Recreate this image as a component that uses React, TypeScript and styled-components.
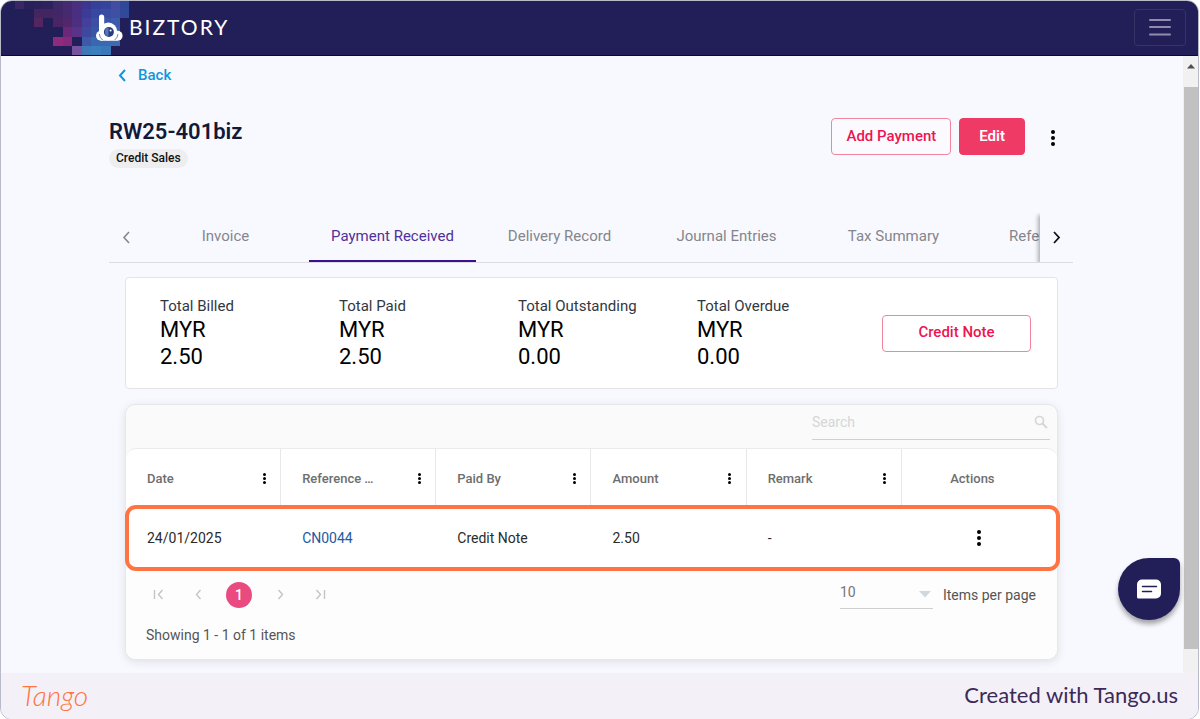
import React from "react";
import styled, { createGlobalStyle, css } from "styled-components";

const GlobalStyle = createGlobalStyle`
  *, *::before, *::after { box-sizing: border-box; }
  body {
    margin: 0;
    background: #ffffff;
    font-family: Roboto, "Liberation Sans", sans-serif;
    color: #212529;
  }
  button, input, select { font: inherit; color: inherit; }
  button { cursor: pointer; }
`;

const Frame = styled.div`
  display: flex;
  flex-direction: column;
  min-height: 100vh;
  margin-right: 1px;
  border: 1px solid #b9bac8;
  border-radius: 12px;
  overflow: hidden;
  background: #f8f9fe;
`;

const TopBar = styled.header`
  display: flex;
  justify-content: space-between;
  align-items: center;
  height: 55px;
  padding-right: 12px;
  background: #221e58;
  border-bottom: 1px solid #0c0838;
`;

const Brand = styled.a`
  display: flex;
  align-items: center;
  height: 54px;
  color: #ffffff;
  text-decoration: none;
  font: 400 21px/24px Lato, sans-serif;
  letter-spacing: 2px;
`;

const BrandName = styled.span`
  padding-bottom: 2px;
`;

const MenuButton = styled.button`
  display: grid;
  place-items: center;
  width: 52px;
  height: 37px;
  margin-bottom: 2px;
  padding: 0;
  background: none;
  border: 1px solid #373366;
  border-radius: 4px;
`;

const Viewport = styled.div`
  display: flex;
  flex: 1;
`;

const Page = styled.main`
  position: relative;
  flex: 1;
  min-width: 0;
  padding: 8px 110px 13px 108px;
`;

const ScrollTrack = styled.div`
  display: flex;
  flex-direction: column;
  width: 15px;
  padding: 8px 0 24px;
  background: #f1f1f1;
`;

const ScrollArrow = styled.svg`
  align-self: center;
  margin-bottom: 18px;
`;

const ScrollThumb = styled.div`
  flex: 1;
  margin-left: 1px;
  background: #c1c1c1;
`;

const BackLink = styled.a`
  display: inline-flex;
  align-items: center;
  gap: 12px;
  padding-left: 9px;
  color: #1296db;
  font-size: 15px;
  line-height: 22px;
  font-weight: 500;
  text-decoration: none;
`;

const Heading = styled.div`
  display: flex;
  justify-content: space-between;
  align-items: flex-start;
  margin-top: 30px;
`;

const Title = styled.h1`
  margin: 0;
  color: #121a3a;
  font-size: 22px;
  line-height: 31px;
  font-weight: 600;
`;

const Tag = styled.span`
  display: inline-block;
  padding: 0 7px;
  border-radius: 10px;
  background: #eeeeee;
  color: #111111;
  font-size: 12px;
  line-height: 19px;
  font-weight: 500;
`;

const ActionGroup = styled.div`
  display: flex;
  align-items: center;
  gap: 8px;
  padding: 2px 8px 0 0;
`;

const Button = styled.button<{ $solid?: boolean; $wide?: boolean }>`
  height: 37px;
  padding: 0 14px 2px;
  border: 1px solid #f2849c;
  border-radius: 4px;
  background: #fbfbff;
  color: #ee1451;
  font-size: 15px;
  font-weight: 500;
  ${(p) =>
    p.$solid &&
    css`
      padding: 0 19px 2px;
      border-color: #ef3a66;
      background: #ef3a66;
      color: #ffffff;
      font-weight: 600;
    `}
  ${(p) =>
    p.$wide &&
    css`
      width: 149px;
      background: #ffffff;
    `}
`;

const IconButton = styled.button`
  display: inline-grid;
  place-items: center;
  min-width: 16px;
  height: 24px;
  padding: 0;
  border: 0;
  background: none;
`;

const ActionMenu = styled(IconButton)`
  width: 24px;
  margin: 2px 0 0 8px;
`;

const TabBar = styled.nav`
  display: flex;
  height: 50px;
  margin-top: 45px;
  border-bottom: 1px solid #dcdde3;
`;

const TabArrow = styled.button<{ $raised?: boolean }>`
  display: grid;
  place-items: center;
  flex: none;
  width: 33px;
  padding: 0;
  border: 0;
  background: #f8f9fe;
  ${(p) =>
    p.$raised &&
    css`
      box-shadow: -2px 2px 4px rgba(0, 0, 0, 0.3);
      clip-path: inset(0 0 0 -8px);
    `}
`;

const TabList = styled.div`
  display: flex;
  flex: 1;
  min-width: 0;
  overflow: hidden;
`;

const Tab = styled.button<{ $active?: boolean }>`
  flex: none;
  min-width: 167px;
  padding: 0 22px 1px;
  border: 0;
  border-bottom: 2px solid ${(p) => (p.$active ? "#3c0f91" : "transparent")};
  background: none;
  color: ${(p) => (p.$active ? "#52309a" : "#85868c")};
  font-size: 15px;
  white-space: nowrap;
  &:last-child { padding: 0 32px 1px; }
`;

const Panel = styled.div`
  padding: 14px 15px 0 16px;
`;

const Summary = styled.section`
  display: flex;
  align-items: center;
  justify-content: space-between;
  height: 112px;
  padding: 0 26px 0 34px;
  border: 1px solid #e3e4e8;
  border-radius: 4px;
  background: #ffffff;
`;

const Totals = styled.dl`
  display: grid;
  grid-template-columns: repeat(4, 179px);
  margin: 0;
`;

const TotalLabel = styled.dt`
  color: #333840;
  font-size: 15px;
  line-height: 20px;
`;

const TotalValue = styled.dd`
  width: 64px;
  margin: 0;
  color: #000000;
  font-size: 22px;
  line-height: 27px;
`;

const GridCard = styled.section`
  margin-top: 15px;
  border: 1px solid #e6e7ea;
  border-radius: 10px;
  background: #fafafa;
  box-shadow: 0 2px 10px rgba(0, 0, 0, 0.1);
`;

const GridToolbar = styled.div`
  display: flex;
  justify-content: flex-end;
  height: 43px;
  padding: 0 7px;
`;

const SearchBox = styled.label`
  display: flex;
  align-items: center;
  width: 238px;
  height: 35px;
  border-bottom: 1px solid #cfd0d2;
`;

const SearchInput = styled.input`
  flex: 1;
  min-width: 0;
  padding: 0;
  border: 0;
  outline: 0;
  background: none;
  font-size: 14px;
  &::placeholder { color: #d5d6d8; opacity: 1; }
`;

const TableArea = styled.div`
  position: relative;
`;

const RowHighlight = styled.div`
  position: absolute;
  right: -3px;
  bottom: -1px;
  left: -1px;
  height: 66px;
  border: 4px solid #ff7442;
  border-radius: 11px;
  pointer-events: none;
`;

const DataTable = styled.table`
  width: 100%;
  table-layout: fixed;
  border-collapse: separate;
  border-spacing: 0;
  border-top: 1px solid #ececec;
  border-radius: 10px 10px 0 0;
  background: #ffffff;
`;

const HeaderCell = styled.th`
  height: 57px;
  padding: 2px 8px 0 21px;
  border-right: 1px solid #e8e8e8;
  color: #6e6e6e;
  font-size: 13px;
  font-weight: 500;
  text-align: left;
  &:last-child { border-right: 0; padding: 2px 14px 0 0; text-align: center; }
`;

const HeaderContent = styled.div`
  display: flex;
  justify-content: space-between;
  align-items: center;
`;

const Cell = styled.td`
  height: 64px;
  padding: 0 8px 0 21px;
  color: #2b2b2b;
  font-size: 14px;
  &:last-child { padding: 0; text-align: center; }
`;

const RecordLink = styled.a`
  color: #1f5aa0;
  text-decoration: none;
`;

const GridFooter = styled.footer`
  height: 89px;
  padding: 10px 21px 0 20px;
  border-radius: 0 0 10px 10px;
  background: #fdfdfd;
  color: #555555;
  font-size: 14px;
`;

const PagerRow = styled.div`
  display: flex;
  justify-content: space-between;
  align-items: center;
`;

const Pager = styled.nav`
  display: flex;
  align-items: center;
  gap: 16px;
`;

const PageButton = styled.button<{ $current?: boolean }>`
  display: grid;
  place-items: center;
  width: 24px;
  height: 26px;
  padding: 0;
  border: 0;
  background: none;
  ${(p) =>
    p.$current &&
    css`
      width: 26px;
      border-radius: 50%;
      background: #e94b80;
      color: #ffffff;
      font-weight: 500;
    `}
`;

const PageSize = styled.label`
  display: flex;
  align-items: center;
  gap: 10px;
`;

const SelectWrap = styled.span`
  display: flex;
  align-items: center;
  width: 93px;
  height: 29px;
  border-bottom: 1px solid #cfcfcf;
`;

const Select = styled.select`
  flex: 1;
  padding: 0 0 4px;
  border: 0;
  appearance: none;
  background: none;
  color: #757575;
`;

const Showing = styled.p`
  margin: 16px 0 0;
  line-height: 20px;
`;

const ChatButton = styled.button`
  position: absolute;
  right: 3px;
  bottom: 53px;
  display: grid;
  place-items: center;
  width: 62px;
  height: 62px;
  padding: 0;
  border: 0;
  border-radius: 31px 6px 31px 31px;
  background: #221e58;
  box-shadow: 0 4px 5px rgba(0, 0, 0, 0.35);
`;

const Credit = styled.footer`
  display: flex;
  justify-content: space-between;
  align-items: center;
  height: 46px;
  padding: 0 20px 2px;
  background: #f3f1f7;
  color: #3d2957;
  font: 400 22px/28px Lato, sans-serif;
`;

const TangoMark = styled.a`
  color: #ff7442;
  font: italic 300 28px/32px Lato, sans-serif;
  text-decoration: none;
`;

const Dots = ({ size = 4, step = 6 }: { size?: number; step?: number }) => (
  <svg width={size} height={step * 2 + size} fill="#000" aria-hidden="true">
    {[0, 1, 2].map((i) => (
      <circle key={i} cx={size / 2} cy={size / 2 + i * step} r={size / 2} />
    ))}
  </svg>
);

const Chevron = ({ d, w = 7, h = 12, color, stroke = 1.6 }: { d: string; w?: number; h?: number; color: string; stroke?: number }) => (
  <svg width={w} height={h} viewBox={`0 0 ${w} ${h}`} fill="none" stroke={color} strokeWidth={stroke} aria-hidden="true">
    <path d={d} />
  </svg>
);

const MOSAIC: [number, number, string][] = [
  [1, 0, "#382764"], [2, 0, "#292059"], [3, 0, "#2b205c"], [4, 0, "#2d215e"], [5, 0, "#3f2868"], [6, 0, "#452a70"], [7, 0, "#482f80"], [8, 0, "#3d3590"], [9, 0, "#354099"], [10, 0, "#35439c"], [11, 0, "#444ba2"], [12, 0, "#2f4899"],
  [3, 1, "#43255f"], [4, 1, "#432560"], [5, 1, "#41276a"], [6, 1, "#46296f"], [7, 1, "#4a2e80"], [8, 1, "#3b3b98"], [9, 1, "#3748a0"], [10, 1, "#394da2"], [11, 1, "#3e50a4"], [12, 1, "#304999"],
  [3, 2, "#542660"], [5, 2, "#4a2566"], [6, 2, "#51276c"], [7, 2, "#4d2f80"], [8, 2, "#433f9a"], [9, 2, "#3c4fa3"], [10, 2, "#3c55a8"], [11, 2, "#3c5bab"],
  [6, 3, "#6b2878"], [7, 3, "#583389"], [8, 3, "#3d499d"], [9, 3, "#3956a5"], [10, 3, "#3b5dad"], [11, 3, "#3c65b1"],
  [5, 4, "#902a7d"], [6, 4, "#842a7d"], [8, 4, "#3e59a7"], [9, 4, "#3b66b0"], [10, 4, "#3a69b1"], [11, 4, "#3e6ab0"],
  [7, 5, "#77529f"], [8, 5, "#3d78b7"], [9, 5, "#397fbe"], [10, 5, "#3b78b9"],
];

const BrandMark = () => (
  <svg width="128" height="54" viewBox="1 1 128 54" aria-hidden="true">
    <g shapeRendering="crispEdges">
      {MOSAIC.map(([c, r, fill]) => (
        <rect key={`${c}-${r}`} x={5 + c * 9.6} y={-0.8 + r * 9.4} width="9.6" height="9.4" fill={fill} />
      ))}
    </g>
    <g fill="#fff">
      <rect x="99" y="14.500" width="5.200" height="20" rx="2.600" />
      <circle cx="101" cy="35.800" r="5" />
      <circle cx="117.600" cy="35.800" r="5" />
      <rect x="100" y="34" width="18" height="6.800" rx="2" />
      <circle cx="108.300" cy="31.500" r="8.900" />
    </g>
    <circle cx="108.900" cy="32" r="5" fill="#2b3b80" />
    <path d="M108.500 27.600a4.500 4.500 0 0 0 0 8.800z" fill="#4d79b8" />
    <circle cx="110.600" cy="30.400" r="1" fill="#fff" />
    <path d="M99.300 34q.3 3.600 3.300 6M118 34q-.3 3.600-3.300 6" fill="none" stroke="#4467a8" strokeWidth=".8" />
  </svg>
);

const COLUMNS = ["Date", "Reference …", "Paid By", "Amount", "Remark"];
const TABS = ["Invoice", "Payment Received", "Delivery Record", "Journal Entries", "Tax Summary", "Reference Notes"];
const TOTALS = [
  ["Total Billed", "2.50"],
  ["Total Paid", "2.50"],
  ["Total Outstanding", "0.00"],
  ["Total Overdue", "0.00"],
];

export default function App() {
  return (
    <Frame>
      <GlobalStyle />
      <TopBar>
        <Brand href="#">
          <BrandMark />
          <BrandName>BIZTORY</BrandName>
        </Brand>
        <MenuButton aria-label="Menu">
          <svg width="22" height="18" stroke="#8f8dab" strokeWidth="2" strokeLinecap="round" aria-hidden="true">
            <path d="M1 2h20M1 9h20M1 16.500h20" />
          </svg>
        </MenuButton>
      </TopBar>
      <Viewport>
        <Page>
          <BackLink href="#">
            <Chevron d="M7 1L2 6.500L7 12" w={8} h={13} color="#1296db" stroke={2} />
            Back
          </BackLink>
          <Heading>
            <div>
              <Title>RW25-401biz</Title>
              <Tag>Credit Sales</Tag>
            </div>
            <ActionGroup>
              <Button>Add Payment</Button>
              <Button $solid>Edit</Button>
              <ActionMenu aria-label="More actions">
                <Dots />
              </ActionMenu>
            </ActionGroup>
          </Heading>
          <TabBar>
            <TabArrow aria-label="Previous tabs">
              <Chevron d="M7 1L2 6.500L7 12" w={8} h={13} color="#85868c" />
            </TabArrow>
            <TabList role="tablist">
              {TABS.map((t) => (
                <Tab key={t} role="tab" $active={t === "Payment Received"} aria-selected={t === "Payment Received"}>
                  {t}
                </Tab>
              ))}
            </TabList>
            <TabArrow $raised aria-label="Next tabs">
              <Chevron d="M1 1L6 6.500L1 12" w={8} h={13} color="#111" stroke={1.8} />
            </TabArrow>
          </TabBar>
          <Panel>
            <Summary>
              <Totals>
                {TOTALS.map(([label, value]) => (
                  <div key={label}>
                    <TotalLabel>{label}</TotalLabel>
                    <TotalValue>MYR {value}</TotalValue>
                  </div>
                ))}
              </Totals>
              <Button $wide>Credit Note</Button>
            </Summary>
            <GridCard>
              <GridToolbar>
                <SearchBox>
                  <SearchInput placeholder="Search" aria-label="Search" />
                  <svg width="16" height="14" viewBox="0 0 16 14" fill="none" stroke="#d5d6d8" strokeWidth="1.700" aria-hidden="true">
                    <circle cx="5.500" cy="5.500" r="4" />
                    <path d="M8.500 8.500L13 13" strokeWidth="2" />
                  </svg>
                </SearchBox>
              </GridToolbar>
              <TableArea>
                <DataTable>
                  <thead>
                    <tr>
                      {COLUMNS.map((c) => (
                        <HeaderCell key={c}>
                          <HeaderContent>
                            {c}
                            <IconButton aria-label={`${c} column menu`}>
                              <Dots size={3} step={4} />
                            </IconButton>
                          </HeaderContent>
                        </HeaderCell>
                      ))}
                      <HeaderCell>Actions</HeaderCell>
                    </tr>
                  </thead>
                  <tbody>
                    <tr>
                      <Cell>24/01/2025</Cell>
                      <Cell>
                        <RecordLink href="#">CN0044</RecordLink>
                      </Cell>
                      <Cell>Credit Note</Cell>
                      <Cell>2.50</Cell>
                      <Cell>-</Cell>
                      <Cell>
                        <IconButton aria-label="Row actions">
                          <Dots />
                        </IconButton>
                      </Cell>
                    </tr>
                  </tbody>
                </DataTable>
                <RowHighlight />
              </TableArea>
              <GridFooter>
                <PagerRow>
                  <Pager aria-label="Pagination">
                    <PageButton aria-label="First page">
                      <Chevron d="M1.500 1V10M9.500 1L5.500 5.500L9.500 10" w={11} h={11} color="#c4c4c4" stroke={1.4} />
                    </PageButton>
                    <PageButton aria-label="Previous page">
                      <Chevron d="M5.500 1L1.500 5.500L5.500 10" w={7} h={11} color="#c4c4c4" stroke={1.4} />
                    </PageButton>
                    <PageButton $current>1</PageButton>
                    <PageButton aria-label="Next page">
                      <Chevron d="M1.500 1L5.500 5.500L1.500 10" w={7} h={11} color="#c4c4c4" stroke={1.4} />
                    </PageButton>
                    <PageButton aria-label="Last page">
                      <Chevron d="M1.500 1L5.500 5.500L1.500 10M9.500 1V10" w={11} h={11} color="#c4c4c4" stroke={1.4} />
                    </PageButton>
                  </Pager>
                  <PageSize>
                    <SelectWrap>
                      <Select defaultValue="10">
                        <option>10</option>
                      </Select>
                      <svg width="16" height="7" fill="#d2d7de" aria-hidden="true">
                        <path d="M2 0h12L8 6.500z" />
                      </svg>
                    </SelectWrap>
                    Items per page
                  </PageSize>
                </PagerRow>
                <Showing>Showing 1 - 1 of 1 items</Showing>
              </GridFooter>
            </GridCard>
          </Panel>
          <ChatButton aria-label="Open chat">
            <svg width="24" height="20" viewBox="0 0 24 20" aria-hidden="true">
              <path d="M5 0.500h14a5 5 0 0 1 5 5v9a5 5 0 0 1-5 5H1.500A1.500 1.500 0 0 1 0 18V5.500a5 5 0 0 1 5-5z" fill="#fff" />
              <path d="M5.500 7.500h14M5.500 12.500h9" stroke="#221e58" strokeWidth="1.500" strokeLinecap="round" />
            </svg>
          </ChatButton>
        </Page>
        <ScrollTrack aria-hidden="true">
          <ScrollArrow width="8" height="5" fill="#505050">
            <path d="M4 0L8 4.500H0z" />
          </ScrollArrow>
          <ScrollThumb />
        </ScrollTrack>
      </Viewport>
      <Credit>
        <TangoMark href="#">Tango</TangoMark>
        <span>Created with Tango.us</span>
      </Credit>
    </Frame>
  );
}
